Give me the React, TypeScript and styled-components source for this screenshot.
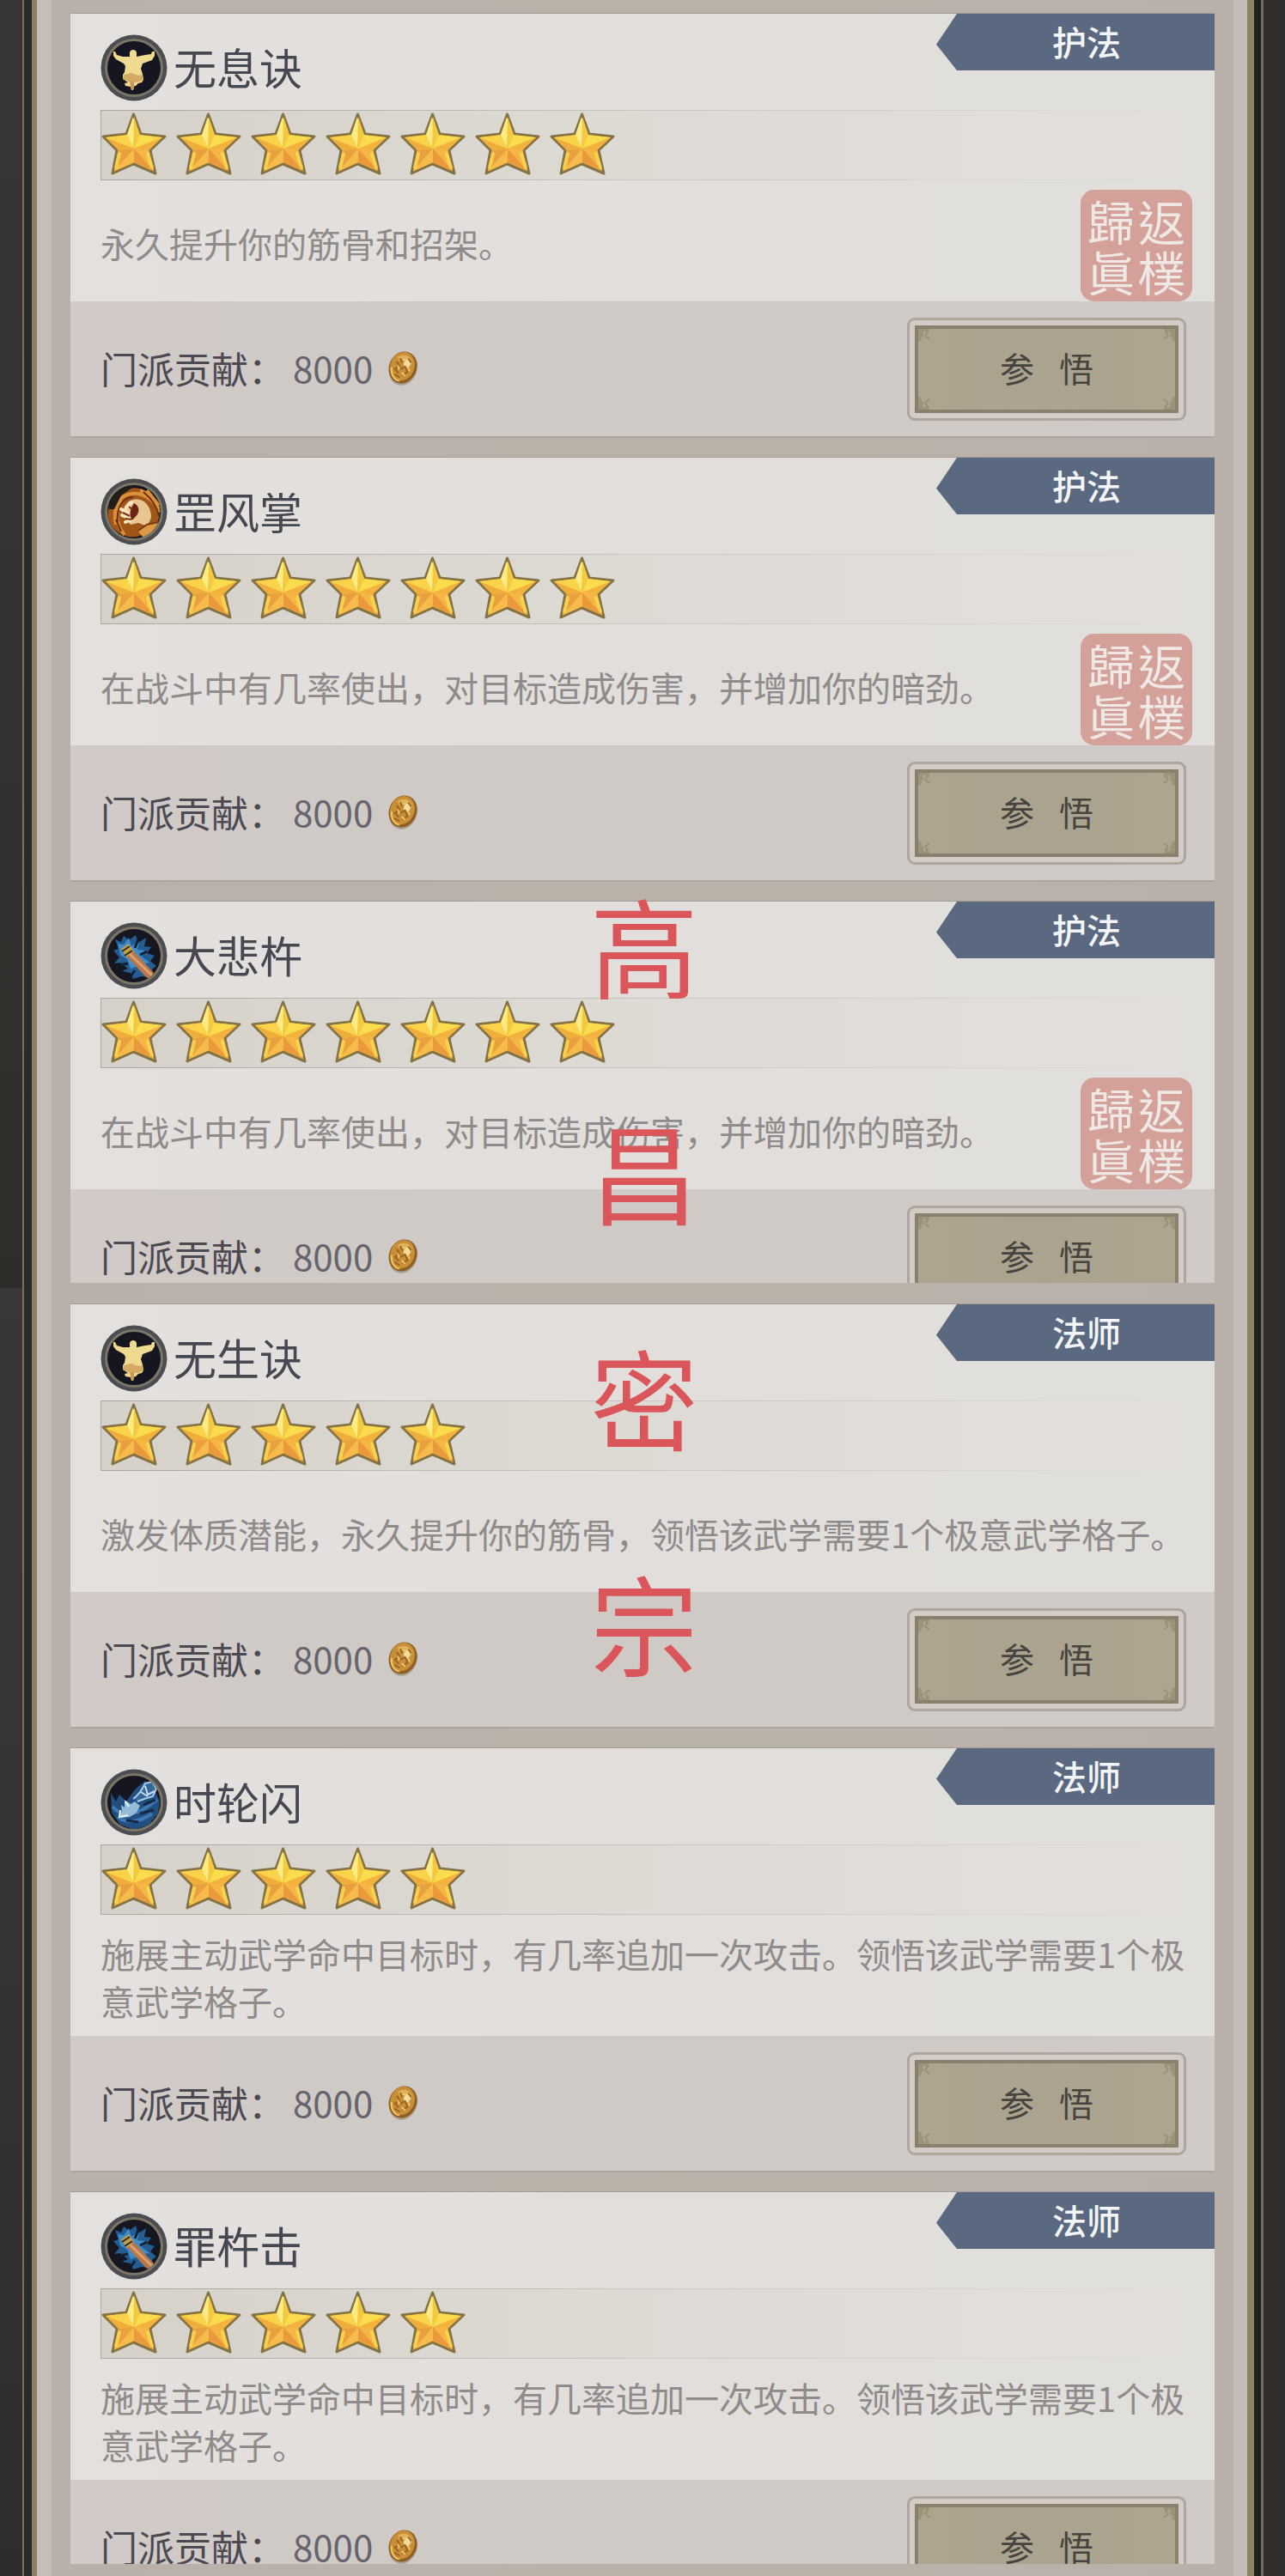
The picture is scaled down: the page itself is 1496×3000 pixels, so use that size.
import React from "react";
import styled, { createGlobalStyle } from "styled-components";

const GlobalStyle = createGlobalStyle`
  *, *::before, *::after { box-sizing: border-box; }
  html, body { margin: 0; padding: 0; }
  body {
    background: #bab1a9;
    font-family: "Noto Sans CJK SC", "Noto Sans", sans-serif;
  }
  h2, p, ul, dl, dd { margin: 0; padding: 0; }
`;

const Page = styled.div`
  position: relative;
  display: flex;
`;

const LeftRail = styled.div`
  flex: 0 0 60px;
  display: grid;
  grid-template-columns: 26px 2px 9px 6px 17px;
`;

const RightRail = styled.div`
  flex: 0 0 60px;
  display: grid;
  grid-template-columns: 16px 8px 8px 3px 1fr;
`;

const Strip = styled.div<{ $fill: string }>`
  background: ${(p) => p.$fill};
`;

const Panel = styled.main`
  flex: 1;
  min-width: 0;
  display: flex;
  flex-direction: column;
  gap: 25px;
  padding: 16px 22px 14px;
  background: linear-gradient(90deg, #b9b0aa, #bab2a9 50%, #bab0aa);
`;

const CardList = styled.section`
  display: flex;
  flex-direction: column;
  gap: 25px;
`;

const Card = styled.article<{ $visible?: number }>`
  flex: none;
  overflow: hidden;
  max-height: ${(p) => (p.$visible ? `${p.$visible}px` : "none")};
  box-shadow: 0 -1px 0 #a39b94, 0 2px 0 ${(p) => (p.$visible ? "transparent" : "#aca49e")};
`;

const CardHead = styled.div`
  position: relative;
  height: 335px;
  padding: 24px 34px 0 35px;
  display: flex;
  flex-direction: column;
  background: linear-gradient(90deg, #e3e0dd, #e1dedb 50%, #e1dfdc);
`;

const TitleRow = styled.div`
  display: flex;
  align-items: center;
  gap: 7px;
  height: 78px;
`;

const Title = styled.h2`
  padding-bottom: 4px;
  font-size: 50px;
  line-height: 74px;
  font-weight: 400;
  color: #484650;
`;

const Ribbon = styled.div`
  position: absolute;
  top: 0;
  right: 0;
  width: 324px;
  height: 66px;
  padding-left: 26px;
  background: #5a697f;
  clip-path: polygon(0 54%, 24px 0, 100% 0, 100% 100%, 24px 100%);
  color: #f4f5f8;
  font-size: 40px;
  line-height: 64px;
  font-weight: 500;
  text-align: center;
`;

const StarRow = styled.ul`
  display: flex;
  gap: 11px;
  height: 82px;
  margin-top: 10px;
  padding: 2px 0 0;
  list-style: none;
  border: 1px solid;
  border-right: 0;
  border-image: linear-gradient(90deg, #a9a6a1, #c9c6c2 50%, #e1dedb) 1;
  background: linear-gradient(90deg, #d6d2ca, #dddad4 45%, #e1dedb 85%);
`;

const Description = styled.p`
  flex: 1;
  display: flex;
  align-items: center;
  padding-top: 5px;
  font-size: 40px;
  line-height: 55px;
  color: #8f8b8a;
`;

const Seal = styled.div`
  position: absolute;
  right: 26px;
  bottom: 0;
  width: 130px;
  height: 130px;
  padding: 6px;
  display: grid;
  grid-template-columns: 1fr 1fr;
  border-radius: 16px;
  background: #d3a199;
  color: #efe8e4;
  font-family: "Noto Sans CJK TC", "Noto Sans CJK SC", sans-serif;
  font-size: 55px;
  line-height: 58px;
  text-align: center;
`;

const CardFoot = styled.div`
  height: 157px;
  padding: 1px 33px 0 35px;
  display: flex;
  align-items: center;
  justify-content: space-between;
  background: linear-gradient(90deg, #d1cac7, #cfcac5 50%, #d0cac8);
`;

const Cost = styled.dl`
  display: flex;
  align-items: center;
  padding-bottom: 4px;
  font-size: 43px;
  line-height: 60px;
  color: #4b4952;
`;

const CostValue = styled.dd`
  display: flex;
  align-items: center;
  gap: 16px;
  margin-left: 9px;
  font-size: 42px;
  color: #66646c;
`;

const StudyButton = styled.button`
  position: relative;
  width: 325px;
  height: 120px;
  padding: 6px;
  border: 3px solid #aea59d;
  border-radius: 9px;
  background: #d3cbc5;
  color: #47433f;
  font-family: inherit;
  font-size: 40px;
  line-height: 60px;
  cursor: pointer;
`;

const ButtonFace = styled.span`
  position: relative;
  display: flex;
  align-items: center;
  justify-content: center;
  height: 100%;
  padding-bottom: 4px;
  border: 4px solid #8b806e;
  background: linear-gradient(90deg, #ada590, #aba28f 50%, #aea591);
  white-space: pre;
`;

const Corner = styled.svg<{ $x: number; $y: number }>`
  position: absolute;
  ${(p) => (p.$x > 0 ? "left: 0;" : "right: 0;")}
  ${(p) => (p.$y > 0 ? "top: 0;" : "bottom: 0;")}
  transform: scale(${(p) => p.$x}, ${(p) => p.$y});
`;

const Watermark = styled.div`
  position: absolute;
  top: 968px;
  left: 50%;
  width: 126px;
  margin-left: -61px;
  font-size: 126px;
  line-height: 263px;
  color: #db565b;
  pointer-events: none;
  word-break: break-all;
`;

const Star = () => (
  <svg width="76" height="74" viewBox="0 0 76 74" aria-hidden="true">
    <defs>
      <linearGradient id="starFill" x1="0" y1="0" x2="0" y2="1">
        <stop offset="0" stopColor="#fdf07a" />
        <stop offset="0.4" stopColor="#fbd84a" />
        <stop offset="0.7" stopColor="#f3ad3c" />
        <stop offset="1" stopColor="#f6c544" />
      </linearGradient>
    </defs>
    <path
      d="M37.500 2L46 25L74 28L57 44L63 71L37.500 60L13 71L18 44L2 28L29 25Z"
      fill="url(#starFill)"
      stroke="#857345"
      strokeWidth="3"
      strokeLinejoin="round"
    />
    <path d="M37 5L30 26L37 42Z" fill="#fdec85" />
    <path d="M38 5L45 26L38 42Z" fill="#f3c842" />
    <path d="M45 26L71 29L38 42Z" fill="#fbdc4c" />
    <path d="M71 29L55 44L38 42Z" fill="#f3b23e" />
    <path d="M55 44L61 68L38 42Z" fill="#f6b643" />
    <path d="M61 68L38 58L38 42Z" fill="#ea9a3c" />
    <path d="M38 58L15 68L38 42Z" fill="#f6bb4a" />
    <path d="M15 68L20 44L38 42Z" fill="#e9a03e" />
    <path d="M20 44L5 29L38 42Z" fill="#efad3b" />
    <path d="M5 29L30 26L38 42Z" fill="#fad34a" />
    <path d="M17 64L21 48M59 64L54 48" stroke="#fbdc55" strokeWidth="4" strokeLinecap="round" opacity="0.8" />
  </svg>
);

const Coin = () => (
  <svg width="38" height="42" viewBox="0 0 38 42" aria-hidden="true">
    <g transform="rotate(22 19 21)">
      <ellipse cx="20" cy="22" rx="16" ry="20" fill="#8f8271" opacity="0.6" />
      <ellipse cx="19" cy="21" rx="16" ry="19" fill="#8e5f22" />
      <ellipse cx="18" cy="20" rx="14" ry="17" fill="#c98e38" />
      <path d="M9 12C14 4 26 5 28 14C24 11 17 10 13 16Z" fill="#e0b25a" />
      <ellipse cx="22" cy="15" rx="4" ry="5" fill="#f5dc9c" />
      <path d="M10 17l5 4-4 5 6 3M17 24l4-5 5 5-4 6M13 32l7 1M26 12l-5-3M12 12l4 4" fill="none" stroke="#9a6520" strokeWidth="2" />
      <path d="M13 21l3 4M20 27l5 2M25 19l3 3M16 13l3-2" stroke="#efc873" strokeWidth="2" />
      <path d="M7 26C9 34 15 38 21 37" fill="none" stroke="#efc566" strokeWidth="2" />
    </g>
  </svg>
);

type EmblemKind = "monk" | "palm" | "pestle" | "flash";

const EmblemArt = ({ kind }: { kind: EmblemKind }) => {
  if (kind === "monk") {
    return (
      <g>
        <path
          d="M34 26L34 21Q35 18 38 18Q41 18 42 21L42 26L52 24L59 23L60 20L63 20L63 25L60 30L49 34L47 40L49 46L50 53L48 56L44 57L41 60L37 61L38 65L36 65L35 61L29 60L28 57L32 56L26 52L26 47L28 44L29 37L27 34L18 29L15 25L15 20L17 20L19 24L26 26Z"
          fill="#f0da90"
        />
        <path d="M27 47L36 45L44 48L49 47L50 53L43 56L33 55L26 52Z" fill="#d2aa62" />
        <path d="M34 55h5v9l-3 1z" fill="#c39a55" />
      </g>
    );
  }
  if (kind === "palm") {
    return (
      <g>
        <path d="M8 44C10 20 28 8 46 12c14 4 24 18 22 34-4 16-22 24-36 22C18 64 10 56 8 44z" fill="#a05519" />
        <path d="M18 54C14 36 20 20 36 18c14-2 26 8 32 18M28 66C16 52 18 34 26 26M46 14c10 4 18 14 22 26M54 14l14 18" fill="none" stroke="#dc9038" strokeWidth="4" />
        <path d="M20 52C18 34 26 22 38 22M50 16C60 24 66 34 68 44M24 62L18 48" fill="none" stroke="#6b2f12" strokeWidth="2" />
        <path d="M30 30c4-5 10-7 16-5 8 2 12 10 13 18 0 6-3 10-7 12l-8-3-9 2-6-7-4-8z" fill="#e9c592" />
        <path d="M24 36l8 4M25 43l9 3M29 51l8-3M36 28l-6 6" stroke="#fbe7c0" strokeWidth="4" strokeLinecap="round" />
        <path d="M39 29c5 2 7 8 4 13l-6 7c-4-5-3-13 2-20z" fill="#6d2413" />
        <path d="M26 40l8 4M29 47l7 1M33 33l5 4" stroke="#7d3014" strokeWidth="2" />
        <path d="M44 62l10-8 14-3-6 12-12 6z" fill="#dc9a46" />
        <path d="M44 61l10-7 14-3" fill="none" stroke="#7b3a13" strokeWidth="2" />
        <path d="M10 36C12 18 24 9 40 9L24 20l-8 16z" fill="#221d18" />
      </g>
    );
  }
  if (kind === "pestle") {
    return (
      <g>
        <path d="M17 20l7 3 3-7 6 5 8-6 3 9 9-6-2 10 8 1-5 7 9 3-5 6 7 6-5 4 2 10-14-2-10 3-3-7-10-2 7-3-9-7-7 1 6-7-7-8 6-2z" fill="#235d93" />
        <path d="M20 25l7 1 6-8 3 10 9-6-2 10 9 1-4 7 9 7-6 1 3 9-10-6-9 3-4-11-8-5z" fill="#3f8cc9" />
        <path d="M44 20l-4 10M54 34l-8 4M22 50l10-2M36 62l4-6" stroke="#12202f" strokeWidth="3" />
        <path d="M29 38L52 63l7 5 3-9-26-28z" fill="#b9764a" />
        <path d="M34 37l26 25" stroke="#dc9f72" strokeWidth="3" />
        <path d="M24 31l9-6 6 9-9 7z" fill="#bf9f4c" />
        <path d="M25 34l9-6M28 39l9-6" stroke="#33281a" strokeWidth="2" />
      </g>
    );
  }
  return (
    <g>
      <path d="M12 28l6 10 4-8 8 8 10-14 12-10 10 8 7 16-2 14-12 14-16 5-16-6-10-14z" fill="#234f80" />
      <path d="M14 44c8 10 22 10 34 4 8-4 14-10 18-12M20 56c10 8 26 6 40-4" fill="none" stroke="#3f79b2" strokeWidth="4" />
      <path d="M50 42l14-6M46 52l16-4M30 60l14 2" stroke="#122a48" strokeWidth="3" />
      <path d="M24 42l4 3 0-9 7 5 5-3 6 5-4 8-8 5-9 1-4-4 4-3z" fill="#94bcd8" />
      <path d="M38 35c6-4 10-10 14-18l8-2 5 8-4 9-10 3-8 3" fill="#35679a" stroke="#a5cbe4" strokeWidth="2" />
      <path d="M52 20l3 10 8-4M47 27l8 5" fill="none" stroke="#c8e2f1" strokeWidth="2" />
      <path d="M23 48l-1 8 10-2M29 38l4 6" fill="none" stroke="#e7f4fb" strokeWidth="2" />
    </g>
  );
};

const Emblem = ({ kind, id }: { kind: EmblemKind; id: string }) => (
  <svg width="78" height="78" viewBox="0 0 78 78" aria-hidden="true">
    <defs>
      <clipPath id={id}>
        <circle cx="39" cy="39" r="31" />
      </clipPath>
    </defs>
    <circle cx="39" cy="39" r="38.500" fill="#4c4d51" />
    <circle cx="39" cy="39" r="34" fill="#7b7665" />
    <circle cx="39" cy="39" r="31" fill="#15161f" />
    <g clipPath={`url(#${id})`}>
      <EmblemArt kind={kind} />
    </g>
  </svg>
);

const corners: [number, number][] = [
  [1, 1],
  [-1, 1],
  [1, -1],
  [-1, -1],
];

const Study = () => (
  <StudyButton type="button">
    <ButtonFace>
      {corners.map(([x, y]) => (
        <Corner key={`${x}${y}`} $x={x} $y={y} width="15" height="15" viewBox="0 0 15 15" aria-hidden="true">
          <path d="M0 0h14l-4 4-3-2-2 3 2 3-3 1-1 5-3 1z" fill="#8f8563" opacity="0.55" />
          <path d="M8 7l4-4M8 8l5 4" stroke="#8f8563" strokeWidth="2" opacity="0.6" />
        </Corner>
      ))}
      {"参\u2002 悟"}
    </ButtonFace>
  </StudyButton>
);

interface Skill {
  name: string;
  rank: string;
  stars: number;
  emblem: EmblemKind;
  text: string;
  seal?: boolean;
  visible?: number;
}

const guardians: Skill[] = [
  { name: "无息诀", rank: "护法", stars: 7, emblem: "monk", text: "永久提升你的筋骨和招架。", seal: true },
  { name: "罡风掌", rank: "护法", stars: 7, emblem: "palm", text: "在战斗中有几率使出，对目标造成伤害，并增加你的暗劲。", seal: true },
  { name: "大悲杵", rank: "护法", stars: 7, emblem: "pestle", text: "在战斗中有几率使出，对目标造成伤害，并增加你的暗劲。", seal: true, visible: 444 },
];

const mages: Skill[] = [
  { name: "无生诀", rank: "法师", stars: 5, emblem: "monk", text: "激发体质潜能，永久提升你的筋骨，领悟该武学需要1个极意武学格子。" },
  { name: "时轮闪", rank: "法师", stars: 5, emblem: "flash", text: "施展主动武学命中目标时，有几率追加一次攻击。领悟该武学需要1个极意武学格子。" },
  { name: "罪杵击", rank: "法师", stars: 5, emblem: "pestle", text: "施展主动武学命中目标时，有几率追加一次攻击。领悟该武学需要1个极意武学格子。", visible: 433 },
];

const SkillCard = ({ skill, id }: { skill: Skill; id: string }) => (
  <Card $visible={skill.visible}>
    <CardHead>
      <TitleRow>
        <Emblem kind={skill.emblem} id={id} />
        <Title>{skill.name}</Title>
      </TitleRow>
      <StarRow>
        {Array.from({ length: skill.stars }, (_, i) => (
          <li key={i}>
            <Star />
          </li>
        ))}
      </StarRow>
      <Description>{skill.text}</Description>
      <Ribbon>{skill.rank}</Ribbon>
      {skill.seal && (
        <Seal>
          <span>歸</span>
          <span>返</span>
          <span>眞</span>
          <span>樸</span>
        </Seal>
      )}
    </CardHead>
    <CardFoot>
      <Cost>
        <dt>门派贡献：</dt>
        <CostValue>
          8000
          <Coin />
        </CostValue>
      </Cost>
      <Study />
    </CardFoot>
  </Card>
);

export default function App() {
  return (
    <>
      <GlobalStyle />
      <Page>
        <LeftRail>
          <Strip $fill="linear-gradient(#363634, #343331 25%, #2e2d2a 50%, #383838 50%, #343432 75%, #2e2d2b)" />
          <Strip $fill="#7a705c" />
          <Strip $fill="#282b27" />
          <Strip $fill="#8c7f66" />
          <Strip $fill="#c4bdba" />
        </LeftRail>
        <Panel>
          <CardList>
            {guardians.map((s, i) => (
              <SkillCard key={s.name} skill={s} id={`guardian${i}`} />
            ))}
          </CardList>
          <CardList>
            {mages.map((s, i) => (
              <SkillCard key={s.name} skill={s} id={`mage${i}`} />
            ))}
          </CardList>
        </Panel>
        <RightRail>
          <Strip $fill="#c3bcb8" />
          <Strip $fill="#8d8268" />
          <Strip $fill="#20221f" />
          <Strip $fill="#75695c" />
          <Strip $fill="#312f2e" />
        </RightRail>
        <Watermark>高昌密宗</Watermark>
      </Page>
    </>
  );
}
